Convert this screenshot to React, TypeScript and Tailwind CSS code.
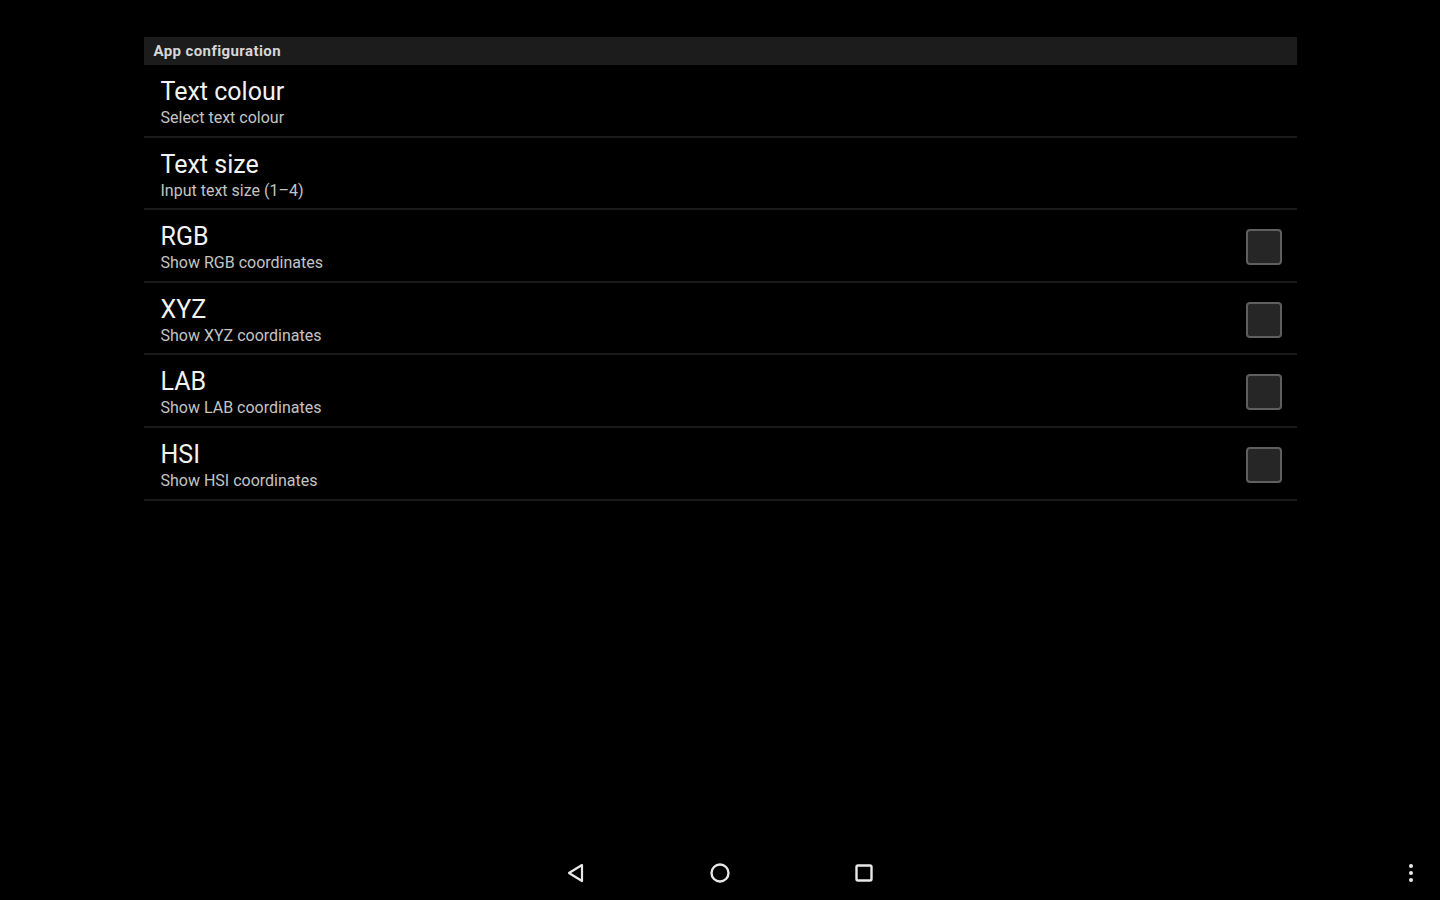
import React from "react";

const rows = [
  { t: "Text colour", s: "Select text colour", cb: false },
  { t: "Text size", s: "Input text size (1\u20134)", cb: false },
  { t: "RGB", s: "Show RGB coordinates", cb: true },
  { t: "XYZ", s: "Show XYZ coordinates", cb: true },
  { t: "LAB", s: "Show LAB coordinates", cb: true },
  { t: "HSI", s: "Show HSI coordinates", cb: true },
];

export default function App() {
  return (
    <div
      className="w-[1440px] h-[900px] bg-black flex flex-col overflow-hidden"
      style={{ fontFamily: "Roboto, 'Noto Sans', sans-serif" }}
    >
      <div className="flex-1 pt-[37px]">
        <div className="w-[1153px] mx-auto">
          <div className="h-[28px] bg-[#1c1c1c] flex items-center pl-[10px] text-[15px] font-bold tracking-[0.4px] text-[#d6d6d6]">
            App configuration
          </div>
          {rows.map((r) => (
            <div
              key={r.t}
              className="h-[72.6px] box-border border-b-2 border-[#1a1a1a] flex items-center pl-[17px] pr-[15px]"
            >
              <div className="flex-1 self-start flex flex-col pt-[13px]">
                <div className="text-[25px] leading-[28px] text-[#f2f2f2]">{r.t}</div>
                <div className="text-[16px] leading-[20px] text-[#c4c4c4] mt-[2px]">{r.s}</div>
              </div>
              {r.cb && (
                <div className="w-[36px] h-[36px] mt-[3px] rounded-[4px] border-2 border-[#5f5f5f] bg-[#262626]" />
              )}
            </div>
          ))}
        </div>
      </div>
      <div className="h-[48px] relative flex items-center justify-center -mt-[3px] mb-[3px]">
        <div className="flex items-center">
          <div className="w-[144px] flex justify-center">
            <svg width="22" height="22" viewBox="0 0 22 22">
              <path d="M17 3 L4 11 L17 19 Z" fill="none" stroke="#e8e8e8" strokeWidth="2.2" strokeLinejoin="round" />
            </svg>
          </div>
          <div className="w-[144px] flex justify-center">
            <svg width="24" height="24" viewBox="0 0 24 24">
              <circle cx="12" cy="12" r="8.5" fill="none" stroke="#e8e8e8" strokeWidth="2.4" />
            </svg>
          </div>
          <div className="w-[144px] flex justify-center">
            <svg width="22" height="22" viewBox="0 0 22 22">
              <rect x="3.5" y="3.5" width="15" height="15" rx="1.5" fill="none" stroke="#e8e8e8" strokeWidth="2.4" />
            </svg>
          </div>
        </div>
        <div className="absolute right-[27px] top-0 h-full flex flex-col items-center justify-center gap-[3px]">
          <div className="w-[4px] h-[4px] rounded-full bg-[#e8e8e8]" />
          <div className="w-[4px] h-[4px] rounded-full bg-[#e8e8e8]" />
          <div className="w-[4px] h-[4px] rounded-full bg-[#e8e8e8]" />
        </div>
      </div>
    </div>
  );
}
